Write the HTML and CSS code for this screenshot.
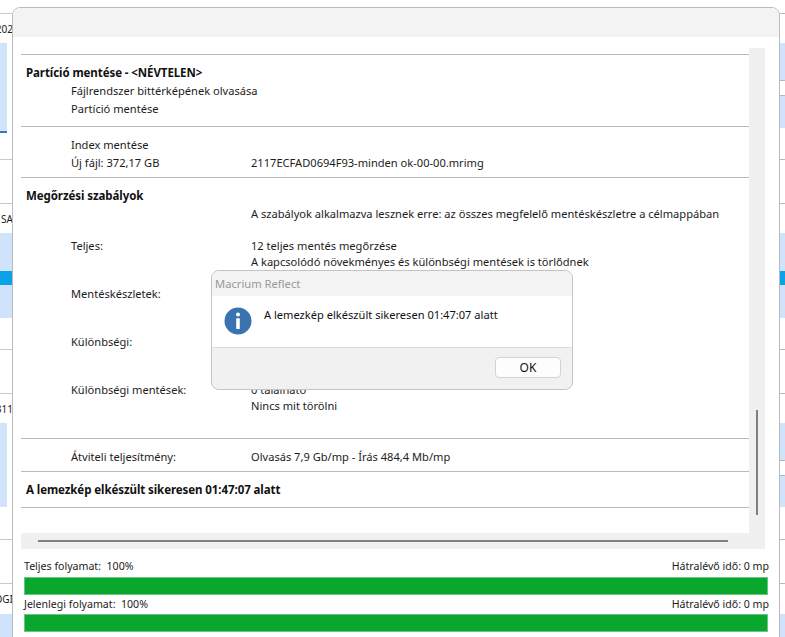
FILE: index.html
```html
<!DOCTYPE html>
<html lang="hu">
<head>
<meta charset="utf-8">
<title>Macrium Reflect</title>
<link rel="stylesheet" href="styles.css">
</head>
<body>
<div class="desktop">
  <div class="strip strip-left">
    <div></div><div class="ln"></div>
    <div class="cut">202</div>
    <div class="blue-short"></div><div class="dark"></div><div></div><div class="ln"></div><div></div><div class="ln"></div>
    <div class="cut">S SA</div>
    <div class="blue"></div><div class="bright"></div><div class="blue"></div>
    <div></div><div class="ln"></div><div></div><div class="ln"></div>
    <div class="cut">311</div>
    <div class="blue-short"></div><div></div><div class="ln"></div><div></div><div class="ln"></div>
    <div class="cut">OGI</div>
    <div class="blue"></div>
  </div>
  <div class="strip strip-right">
    <div></div><div class="ln"></div><div></div>
    <div class="blue"></div><div class="ln"></div><div></div><div class="ln"></div><div class="blue"></div>
    <div></div><div class="ln"></div><div></div><div class="ln"></div><div></div>
    <div class="blue"></div><div class="bright"></div><div class="blue"></div>
    <div></div><div class="ln"></div><div></div><div class="ln"></div><div></div>
    <div class="blue"></div><div class="ln"></div><div></div><div class="ln"></div><div class="blue"></div>
    <div></div><div class="ln"></div><div></div><div class="ln"></div><div></div>
    <div class="blue"></div>
  </div>

  <section class="window">
    <div class="window-title"></div>
    <div class="window-body">
      <div class="log-frame">
        <div class="log">
          <div class="sec sec-a">
            <div class="head">Partíció mentése - &lt;NÉVTELEN&gt;</div>
            <div class="item">Fájlrendszer bittérképének olvasása</div>
            <div class="item">Partíció mentése</div>
          </div>
          <div class="sec sec-b">
            <div class="item">Index mentése</div>
            <div class="pair"><span>Új fájl: 372,17 GB</span><span>2117ECFAD0694F93-minden ok-00-00.mrimg</span></div>
          </div>
          <div class="sec sec-c">
            <div class="head">Megőrzési szabályok</div>
            <div class="pair"><span></span><span>A szabályok alkalmazva lesznek erre: az összes megfelelő mentéskészletre a célmappában</span></div>
            <div class="rules">
              <div class="rule"><span>Teljes:</span><span>12 teljes mentés megőrzése<br>A kapcsolódó növekményes és különbségi mentések is törlődnek</span></div>
              <div class="rule"><span>Mentéskészletek:</span><span></span></div>
              <div class="rule"><span>Különbségi:</span><span></span></div>
              <div class="rule"><span>Különbségi mentések:</span><span>0 található<br>Nincs mit törölni</span></div>
            </div>
          </div>
          <div class="sec sec-d">
            <div class="pair"><span>Átviteli teljesítmény:</span><span>Olvasás 7,9 Gb/mp - Írás 484,4 Mb/mp</span></div>
          </div>
          <div class="sec sec-e">
            <div class="head">A lemezkép elkészült sikeresen 01:47:07 alatt</div>
          </div>
          <div class="sec sec-f"></div>
        </div>
        <div class="vbar"><div class="vthumb"></div></div>
        <div class="hbar"><div class="hthumb"></div></div>
        <div class="corner"></div>
      </div>
      <div class="progress">
        <div class="prog-label prog-label-first"><span>Teljes folyamat:&nbsp; 100%</span><span>Hátralévő idő: 0 mp</span></div>
        <div class="prog-bar"></div>
        <div class="prog-label"><span>Jelenlegi folyamat:&nbsp; 100%</span><span>Hátralévő idő: 0 mp</span></div>
        <div class="prog-bar"></div>
      </div>
    </div>
  </section>

  <section class="dialog">
    <div class="dialog-title">Macrium Reflect</div>
    <div class="dialog-body">
      <svg class="info" viewBox="0 0 28 28" width="28" height="28" aria-hidden="true">
        <circle cx="14" cy="14" r="13.5" fill="#3a73af"/>
        <circle cx="14" cy="7.6" r="2" fill="#fff"/>
        <rect x="12.2" y="11.2" width="3.6" height="10.8" rx="0.6" fill="#fff"/>
      </svg>
      <p class="dialog-text">A lemezkép elkészült sikeresen 01:47:07 alatt</p>
    </div>
    <div class="dialog-foot"><button class="ok" type="button">OK</button></div>
  </section>
</div>
</body>
</html>
```
FILE: styles.css
```css
* { box-sizing: border-box; }
html, body { margin: 0; padding: 0; height: 637px; overflow: hidden; background: #fff; }
body { font-family: "Noto Sans", "Open Sans", sans-serif; font-size: 11.1px; color: #1c1c1c; }

.desktop { position: relative; width: 785px; height: 637px; overflow: hidden; background: #fff; }

/* the application behind the window */
.strip { position: absolute; top: 0; height: 637px; display: grid; overflow: hidden; }
.strip-left {
  left: 0; width: 12px; grid-template-columns: 12px;
  grid-template-rows: 13px 1px 29px 88px 2px 26px 1px 43px 1px 29px 38px 14px 33px 31px 1px 43px 1px 29px 84px 32px 1px 43px 1px 30px 23px;
}
.strip-right {
  left: 780px; width: 5px; grid-template-columns: 5px;
  grid-template-rows: 13px 1px 29px 37px 1px 14px 1px 32px 31px 1px 43px 1px 29px 38px 14px 33px 31px 1px 43px 1px 29px 37px 1px 14px 1px 31px 32px 1px 43px 1px 30px 23px;
}
.ln { background: #c9c9c9; }
.strip-right .ln { background: #b9b9b9; }
.blue { background: #cfe4fa; }
.blue-short { background: #cfe4fa; width: 7px; }
.bright { background: #0aa3e8; }
.dark { background: #2a7dc1; width: 7px; }
.cut { display: flex; justify-content: flex-end; align-items: center; font-size: 10px; white-space: nowrap; color: #222; margin-right: -1px; }

/* main window */
.window {
  position: absolute; left: 12px; top: 7px; width: 768px; height: 660px;
  background: #fff; border: 1px solid #bcbcbc; border-radius: 8px; overflow: hidden;
}
.window-title { height: 29px; background: #f3f3f3; }
.window-body { padding: 11px 14px 0 8px; }

.log-frame {
  display: grid; grid-template-columns: 728px 16px; grid-template-rows: 485px 16px;
  height: 501px;
}
.log { overflow: hidden; padding-top: 6px; }
.sec { border-top: 1px solid #b9b9b9; padding-left: 5px; }
.sec-a { padding-top: 9px; height: 72px; }
.sec-b { padding-top: 9px; height: 51px; }
.sec-c { padding-top: 9px; height: 261px; }
.sec-d { padding-top: 9px; height: 33px; }
.sec-e { padding-top: 9px; height: 36px; }
.sec-f { height: 20px; }

.head { font-size: 11.5px; letter-spacing: -0.08px; font-weight: 700; line-height: 18px; height: 18px; color: #111; }
.item { padding-left: 45px; line-height: 18px; height: 18px; }
.pair { display: grid; grid-template-columns: 181px 1fr; padding-left: 45px; line-height: 18px; height: 18px; white-space: nowrap; }
.pair span:last-child, .rule span:last-child { margin-left: -1px; }
.rules { padding-top: 15px; }
.rule { display: grid; grid-template-columns: 181px 1fr; padding-left: 45px; line-height: 15.8px; height: 48px; white-space: nowrap; }

.vbar { background: #f0f0f0; position: relative; }
.vthumb { position: absolute; left: 7px; top: 362px; width: 2px; height: 105px; background: #808080; }
.hbar { background: #f0f0f0; position: relative; }
.hthumb { position: absolute; left: 17px; top: 7px; width: 690px; height: 2px; background: #808080; }
.corner { background: #f0f0f0; }

.progress { padding: 9px 0 0 3px; width: 748px; }
.prog-label { display: flex; justify-content: space-between; line-height: 19px; height: 19px; font-size: 10.6px; white-space: nowrap; }
.prog-label-first { line-height: 16px; }
.prog-bar { height: 18px; width: 744px; background: #09a72d; border: 1px solid #6cc483; }

/* message box */
.dialog {
  position: absolute; left: 211px; top: 270px; width: 362px; height: 120px;
  border: 1px solid #c4c4c4; border-radius: 8px; overflow: hidden; background: #f1f1f1;
  display: flex; flex-direction: column;
}
.dialog-title { height: 25px; background: #f3f3f3; color: #9a9a9a; padding-left: 3px; line-height: 26px; font-size: 11.2px; }
.dialog-body { height: 52px; background: #fff; border-bottom: 1px solid #dcdcdc; display: flex; align-items: flex-start; padding: 11px 0 0 12px; }
.dialog-text { margin: 0 0 0 12px; line-height: 16px; color: #111; }
.dialog-foot { flex: 1; display: flex; justify-content: flex-end; align-items: flex-start; padding: 9px 11px 0 0; }
.ok { width: 66px; height: 21px; padding: 0; background: #fdfdfd; border: 1px solid #d2d2d2; border-radius: 4px; font: inherit; font-size: 12px; color: #111; }
```
